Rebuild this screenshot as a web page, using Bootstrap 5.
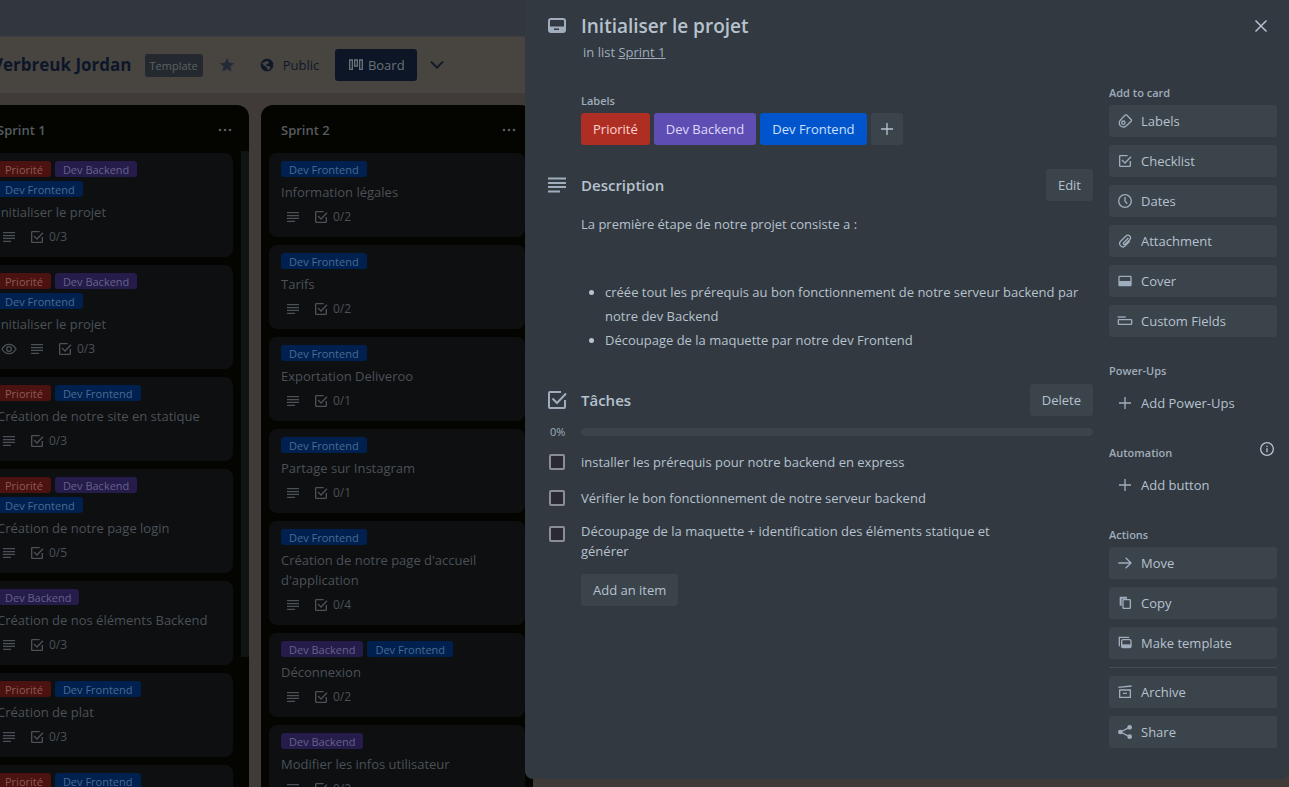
<!DOCTYPE html>
<html lang="fr">
<head>
<meta charset="utf-8">
<meta name="viewport" content="width=device-width, initial-scale=1">
<title>Initialiser le projet</title>
<link href="https://cdn.jsdelivr.net/npm/bootstrap@5.3.0/dist/css/bootstrap.min.css" rel="stylesheet">
<style>
  body { font-family: "Open Sans", "Noto Sans", sans-serif; font-size: 13px; line-height: 20px; color: #b6c2cf; background: #403b38; }
  button { font-family: inherit; }
  .ic { width: 16px; height: 16px; flex: none; fill: none; stroke: currentColor; stroke-width: 2; }
  .ic-lg { width: 24px; height: 24px; }
  .solid { fill: currentColor; stroke: none; }

  /* dimmed board */
  .top-strip { height: 37px; background: #32373e; border-bottom: 1px solid #3b3f42; flex: none; }
  .board-bar { height: 56px; background: #484540; color: #10182a; flex: none; }
  .board-title { font-size: 17px; line-height: 24px; font-weight: 700; color: #0d1629; margin: 0 0 0 -8px; }
  .chip { height: 23px; padding: 0 5px; border-radius: 3px; background: #23292e; color: #5b6166; font-size: 11px; line-height: 24px; margin-left: 13px; }
  .bar-btn { height: 32px; border: 0; background: none; color: #10182a; padding: 0; }
  .bar-btn.current { background: #0d1626; color: #6b7178; border-radius: 3px; width: 82px; }
  .star { color: #222a38; }
  .lists { gap: 12px; margin-left: -23px; padding-top: 12px; min-height: 0; }
  .column { width: 272px; flex: none; background: #040501; border-radius: 12px 12px 0 0; color: #4b5157; }
  .column-head { height: 48px; flex: none; padding: 2px 16px 0 20px; color: #565c61; }
  .column-head h2 { font-size: 13px; line-height: 20px; font-weight: 600; margin: 0; }
  .column-body { padding: 0 8px; gap: 8px; min-height: 0; }
  .column-body.scrolls { padding-right: 16px; }
  .thumb { top: 46px; right: 0; width: 8px; height: 506px; background: #111414; }
  .tile { background: #0d0f11; border-radius: 8px; padding: 8px 12px; flex: none; }
  .tile-tags { gap: 4px; margin-bottom: 5px; }
  .tag-sm { height: 16px; padding: 0 8px; border-radius: 3px; font-size: 11px; line-height: 17px; }
  .tag-sm.red { background: #4b120f; color: #8d5a57; }
  .tag-sm.violet { background: #251c4b; color: #66618a; }
  .tag-sm.blue { background: #00204f; color: #4a6b92; }
  .tile p { margin: 0 0 3px; }
  .tile-meta { height: 24px; gap: 12px; padding-left: 4px; font-size: 12px; }
  .tile-meta span { gap: 4px; }

  /* card dialog */
  .dialog { top: 0; right: 0; width: calc(100% - 525px); min-width: 640px; background: #323940; border-radius: 0 0 8px 8px; padding: 14px 12px 31px 20px; }
  .dialog h1 { font-size: 19px; line-height: 24px; font-weight: 600; margin: 0; color: #b6c2cf; }
  .dialog h2 { font-size: 15px; line-height: 20px; font-weight: 600; margin: 0; color: #b6c2cf; }
  .dialog h3 { font-size: 11px; line-height: 16px; font-weight: 600; margin: 0; color: #9fadbc; }
  .icon-col { width: 36px; flex: none; color: #9fadbc; }
  .in-list { color: #9fadbc; padding-left: 38px; margin-top: 4px; }
  .in-list a { color: inherit; }
  .main-col { padding-top: 31px; }
  .side-col { width: 168px; flex: none; padding-top: 23px; }
  .indent { padding-left: 36px; }
  .soft { height: 32px; border: 0; border-radius: 3px; padding: 0 12px; background: #3b434b; color: #b6c2cf; }
  .tag { height: 32px; border: 0; border-radius: 3px; padding: 0 12px; }
  .tag.red { background: #ae2e24; color: #ffd5d2; }
  .tag.violet { background: #5e4db2; color: #dfd8fd; }
  .tag.blue { background: #0055cc; color: #cce0ff; }
  .desc { padding-top: 11px; }
  .desc p { line-height: 24px; margin: 0 0 44px; }
  .desc ul { line-height: 24px; padding-left: 24px; margin: 0; }
  .bar { height: 8px; border-radius: 4px; background: #3b434b; }
  .pct { width: 36px; flex: none; font-size: 11px; line-height: 8px; color: #9fadbc; padding-left: 5px; }
  .todo { padding-left: 4px; margin-top: 16px; }
  .todo input { appearance: none; width: 16px; height: 16px; margin: 0 16px 0 0; border: 2px solid #8b8d95; border-radius: 2px; background: #2b2a33; flex: none; }
  .todo label { max-width: 440px; }
  .todo.tall { margin-top: 13px; }
  .todo.tall input { margin-top: 5px; }
  .add-row { margin-top: 13px; }
  .side-btn { width: 100%; gap: 8px; padding: 0 8px; margin-bottom: 8px; }
  .side-btn .ic { color: #9fadbc; }
  .side-gap { margin-top: 26px; }
  .auto-row { height: 20px; margin-top: 22px; padding-right: 2px; }
  .plain { background: none; }
  .side-rule { height: 1px; background: #454d55; margin: 0 0 8px; border: 0; opacity: 1; }
  .close-btn { border: 0; background: none; color: #b6c2cf; padding: 0; width: 32px; height: 24px; }
</style>
</head>
<body>
<svg width="0" height="0" class="position-absolute" aria-hidden="true">
  <symbol id="i-desc" viewBox="0 0 24 24"><path d="M3 5.500h18M3 10h18M3 14h18M3 18.500h12"/></symbol>
  <symbol id="i-check" viewBox="0 0 24 24"><path d="M16 4H5a1 1 0 0 0-1 1v14a1 1 0 0 0 1 1h14a1 1 0 0 0 1-1v-7M7.500 10.500l4.500 4.500L21 5.500"/></symbol>
  <symbol id="i-eye" viewBox="0 0 24 24"><path d="M1.500 12C4 7.500 8 5 12 5s8 2.500 10.500 7C20 16.500 16 19 12 19s-8-2.500-10.500-7z"/><circle cx="12" cy="12" r="3.500"/></symbol>
  <symbol id="i-dots" viewBox="0 0 24 24"><g class="solid"><circle cx="4.500" cy="12" r="2"/><circle cx="12" cy="12" r="2"/><circle cx="19.500" cy="12" r="2"/></g></symbol>
  <symbol id="i-star" viewBox="0 0 24 24"><path class="solid" d="M12 1.500l3.200 7 7.600.800-5.700 5.100 1.700 7.600L12 18l-6.800 4 1.700-7.600L1.200 9.300l7.600-.800z"/></symbol>
  <symbol id="i-globe" viewBox="0 0 24 24"><circle cx="12" cy="12" r="8.500"/><path class="solid" d="M3 9l4 3 5 4 1 5-5-1-5-5zM9 3l8 1 4 5v6l-3 3-2-4-5-1v-2l3-1 1-3-4-1-3 2-4 1z"/></symbol>
  <symbol id="i-board" viewBox="0 0 24 24"><path d="M2.500 4.500h4v14h-4zM10 4.500h4v9h-4zM17.500 4.500h4v14h-4z"/></symbol>
  <symbol id="i-down" viewBox="0 0 24 24"><path stroke-width="3" d="M3 7l9 9 9-9"/></symbol>
  <symbol id="i-card" viewBox="0 0 24 24"><rect x="4" y="5" width="16" height="13" rx="2"/><path class="solid" fill-rule="evenodd" d="M4 12.500h16V18H4zM9 14.500V16h5v-1.500z"/></symbol>
  <symbol id="i-close" viewBox="0 0 24 24"><path stroke-width="1.500" d="M6.500 6.500l11 11M17.500 6.500l-11 11"/></symbol>
  <symbol id="i-plus" viewBox="0 0 24 24"><path d="M12 3v18M3 12h18"/></symbol>
  <symbol id="i-label" viewBox="0 0 24 24"><path d="M3.500 13.500c.500-2.500 2-3.500 9-10.500a1.500 1.500 0 0 1 2 0l7 7a1.500 1.500 0 0 1 0 2c-7 7-8 8.500-10.500 9-5 .500-8-2.500-7.500-7.500z"/><circle cx="9.500" cy="14.500" r="2.500"/></symbol>
  <symbol id="i-clock" viewBox="0 0 24 24"><circle cx="12" cy="12" r="9.500"/><path d="M12 6v6.500l3.500 3.500"/></symbol>
  <symbol id="i-clip" viewBox="0 0 24 24"><path d="M17 7.500l-7 7a1.600 1.600 0 0 0 2.300 2.300l6.700-6.800a3.800 3.800 0 0 0-5.500-5.500L5.500 12.500a4.800 4.800 0 0 0 6.800 6.800L19 12.500"/></symbol>
  <symbol id="i-cover" viewBox="0 0 24 24"><rect x="3" y="5" width="18" height="14" rx="1"/><path class="solid" d="M3 12h18v7H3z"/></symbol>
  <symbol id="i-fields" viewBox="0 0 24 24"><path d="M1 6h12"/><rect x="2" y="10" width="20" height="7" rx="1"/></symbol>
  <symbol id="i-info" viewBox="0 0 24 24"><circle cx="12" cy="12" r="9.500"/><path d="M12 11v6M12 7v2"/></symbol>
  <symbol id="i-arrow" viewBox="0 0 24 24"><path d="M2 12h19M13 4l8 8-8 8"/></symbol>
  <symbol id="i-copy" viewBox="0 0 24 24"><rect x="9" y="7" width="11" height="13" rx="1"/><path stroke-width="3" d="M5.500 16V4H15"/></symbol>
  <symbol id="i-tpl" viewBox="0 0 24 24"><rect x="7" y="7" width="14" height="12" rx="2"/><path d="M3.500 17V3.500H18"/><path class="solid" d="M7 14h14v5H7z"/></symbol>
  <symbol id="i-archive" viewBox="0 0 24 24"><path d="M2 5l20-2M4 9h16v11H4zM9 14h6"/></symbol>
  <symbol id="i-share" viewBox="0 0 24 24"><path d="M5 12l14-7M5 12l14 7"/><g class="solid"><circle cx="5" cy="12" r="3.500"/><circle cx="19" cy="5" r="3.500"/><circle cx="19" cy="19" r="3.500"/></g></symbol>
</svg>

<div class="d-flex flex-column vh-100 overflow-hidden">
  <div class="top-strip"></div>
  <header class="board-bar d-flex align-items-center">
    <div class="board-title">Verbreuk Jordan</div>
    <span class="chip">Template</span>
    <button class="bar-btn star d-flex align-items-center ms-3" aria-label="Star"><svg class="ic"><use href="#i-star"/></svg></button>
    <button class="bar-btn d-flex align-items-center gap-2 ms-4"><svg class="ic"><use href="#i-globe"/></svg>Public</button>
    <button class="bar-btn current d-flex align-items-center justify-content-center gap-1 ms-3"><svg class="ic"><use href="#i-board"/></svg>Board</button>
    <button class="bar-btn d-flex align-items-center ms-2 px-1" aria-label="Views"><svg class="ic"><use href="#i-down"/></svg></button>
  </header>
  <main class="lists d-flex flex-grow-1">
    <section class="column d-flex flex-column position-relative">
      <div class="column-head d-flex align-items-center justify-content-between"><h2>Sprint 1</h2><svg class="ic"><use href="#i-dots"/></svg></div>
      <div class="thumb position-absolute"></div>
      <div class="column-body scrolls d-flex flex-column overflow-hidden">
        <article class="tile"><div class="tile-tags d-flex flex-wrap"><span class="tag-sm red">Priorité</span><span class="tag-sm violet">Dev Backend</span><span class="tag-sm blue">Dev Frontend</span></div><p>Initialiser le projet</p><div class="tile-meta d-flex align-items-center"><svg class="ic"><use href="#i-desc"/></svg><span class="d-flex align-items-center"><svg class="ic"><use href="#i-check"/></svg>0/3</span></div></article>
        <article class="tile"><div class="tile-tags d-flex flex-wrap"><span class="tag-sm red">Priorité</span><span class="tag-sm violet">Dev Backend</span><span class="tag-sm blue">Dev Frontend</span></div><p>Initialiser le projet</p><div class="tile-meta d-flex align-items-center"><svg class="ic"><use href="#i-eye"/></svg><svg class="ic"><use href="#i-desc"/></svg><span class="d-flex align-items-center"><svg class="ic"><use href="#i-check"/></svg>0/3</span></div></article>
        <article class="tile"><div class="tile-tags d-flex flex-wrap"><span class="tag-sm red">Priorité</span><span class="tag-sm blue">Dev Frontend</span></div><p>Création de notre site en statique</p><div class="tile-meta d-flex align-items-center"><svg class="ic"><use href="#i-desc"/></svg><span class="d-flex align-items-center"><svg class="ic"><use href="#i-check"/></svg>0/3</span></div></article>
        <article class="tile"><div class="tile-tags d-flex flex-wrap"><span class="tag-sm red">Priorité</span><span class="tag-sm violet">Dev Backend</span><span class="tag-sm blue">Dev Frontend</span></div><p>Création de notre page login</p><div class="tile-meta d-flex align-items-center"><svg class="ic"><use href="#i-desc"/></svg><span class="d-flex align-items-center"><svg class="ic"><use href="#i-check"/></svg>0/5</span></div></article>
        <article class="tile"><div class="tile-tags d-flex flex-wrap"><span class="tag-sm violet">Dev Backend</span></div><p>Création de nos éléments Backend</p><div class="tile-meta d-flex align-items-center"><svg class="ic"><use href="#i-desc"/></svg><span class="d-flex align-items-center"><svg class="ic"><use href="#i-check"/></svg>0/3</span></div></article>
        <article class="tile"><div class="tile-tags d-flex flex-wrap"><span class="tag-sm red">Priorité</span><span class="tag-sm blue">Dev Frontend</span></div><p>Création de plat</p><div class="tile-meta d-flex align-items-center"><svg class="ic"><use href="#i-desc"/></svg><span class="d-flex align-items-center"><svg class="ic"><use href="#i-check"/></svg>0/3</span></div></article>
        <article class="tile"><div class="tile-tags d-flex flex-wrap"><span class="tag-sm red">Priorité</span><span class="tag-sm blue">Dev Frontend</span></div></article>
      </div>
    </section>
    <section class="column d-flex flex-column">
      <div class="column-head d-flex align-items-center justify-content-between"><h2>Sprint 2</h2><svg class="ic"><use href="#i-dots"/></svg></div>
      <div class="column-body d-flex flex-column overflow-hidden">
        <article class="tile"><div class="tile-tags d-flex flex-wrap"><span class="tag-sm blue">Dev Frontend</span></div><p>Information légales</p><div class="tile-meta d-flex align-items-center"><svg class="ic"><use href="#i-desc"/></svg><span class="d-flex align-items-center"><svg class="ic"><use href="#i-check"/></svg>0/2</span></div></article>
        <article class="tile"><div class="tile-tags d-flex flex-wrap"><span class="tag-sm blue">Dev Frontend</span></div><p>Tarifs</p><div class="tile-meta d-flex align-items-center"><svg class="ic"><use href="#i-desc"/></svg><span class="d-flex align-items-center"><svg class="ic"><use href="#i-check"/></svg>0/2</span></div></article>
        <article class="tile"><div class="tile-tags d-flex flex-wrap"><span class="tag-sm blue">Dev Frontend</span></div><p>Exportation Deliveroo</p><div class="tile-meta d-flex align-items-center"><svg class="ic"><use href="#i-desc"/></svg><span class="d-flex align-items-center"><svg class="ic"><use href="#i-check"/></svg>0/1</span></div></article>
        <article class="tile"><div class="tile-tags d-flex flex-wrap"><span class="tag-sm blue">Dev Frontend</span></div><p>Partage sur Instagram</p><div class="tile-meta d-flex align-items-center"><svg class="ic"><use href="#i-desc"/></svg><span class="d-flex align-items-center"><svg class="ic"><use href="#i-check"/></svg>0/1</span></div></article>
        <article class="tile"><div class="tile-tags d-flex flex-wrap"><span class="tag-sm blue">Dev Frontend</span></div><p>Création de notre page d'accueil d'application</p><div class="tile-meta d-flex align-items-center"><svg class="ic"><use href="#i-desc"/></svg><span class="d-flex align-items-center"><svg class="ic"><use href="#i-check"/></svg>0/4</span></div></article>
        <article class="tile"><div class="tile-tags d-flex flex-wrap"><span class="tag-sm violet">Dev Backend</span><span class="tag-sm blue">Dev Frontend</span></div><p>Déconnexion</p><div class="tile-meta d-flex align-items-center"><svg class="ic"><use href="#i-desc"/></svg><span class="d-flex align-items-center"><svg class="ic"><use href="#i-check"/></svg>0/2</span></div></article>
        <article class="tile"><div class="tile-tags d-flex flex-wrap"><span class="tag-sm violet">Dev Backend</span></div><p>Modifier les infos utilisateur</p><div class="tile-meta d-flex align-items-center"><svg class="ic"><use href="#i-desc"/></svg><span class="d-flex align-items-center"><svg class="ic"><use href="#i-check"/></svg>0/2</span></div></article>
      </div>
    </section>
  </main>
</div>

<div class="dialog position-absolute" role="dialog" aria-label="Initialiser le projet">
  <div class="d-flex align-items-center">
    <div class="icon-col d-flex"><svg class="ic ic-lg"><use href="#i-card"/></svg></div>
    <h1 class="flex-grow-1">Initialiser le projet</h1>
    <button class="close-btn d-flex align-items-center justify-content-center" aria-label="Close"><svg class="ic ic-lg"><use href="#i-close"/></svg></button>
  </div>
  <div class="in-list">in list <a href="#">Sprint 1</a></div>

  <div class="d-flex gap-3">
    <div class="main-col flex-grow-1">
      <div class="indent">
        <h3 class="mb-1">Labels</h3>
        <div class="d-flex gap-1">
          <button class="tag red">Priorité</button><button class="tag violet">Dev Backend</button><button class="tag blue">Dev Frontend</button>
          <button class="soft px-2" aria-label="Add label"><svg class="ic d-block"><use href="#i-plus"/></svg></button>
        </div>
      </div>

      <div class="d-flex align-items-center mt-4">
        <div class="icon-col d-flex"><svg class="ic ic-lg"><use href="#i-desc"/></svg></div>
        <h2 class="flex-grow-1">Description</h2>
        <button class="soft">Edit</button>
      </div>
      <div class="desc indent">
        <p>La première étape de notre projet consiste a :</p>
        <ul>
          <li>créée tout les prérequis au bon fonctionnement de notre serveur backend par notre dev Backend</li>
          <li>Découpage de la maquette par notre dev Frontend</li>
        </ul>
      </div>

      <div class="d-flex align-items-center mt-4 pt-2">
        <div class="icon-col d-flex"><svg class="ic ic-lg"><use href="#i-check"/></svg></div>
        <h2 class="flex-grow-1">Tâches</h2>
        <button class="soft">Delete</button>
      </div>
      <div class="d-flex align-items-center mt-2 pt-1">
        <div class="pct">0%</div>
        <div class="bar flex-grow-1" role="progressbar" aria-label="Tâches" aria-valuenow="0" aria-valuemin="0" aria-valuemax="100"></div>
      </div>
      <div class="todo d-flex align-items-center"><input type="checkbox" id="t1"><label for="t1">installer les prérequis pour notre backend en express</label></div>
      <div class="todo d-flex align-items-center"><input type="checkbox" id="t2"><label for="t2">Vérifier le bon fonctionnement de notre serveur backend</label></div>
      <div class="todo tall d-flex align-items-start"><input type="checkbox" id="t3"><label for="t3">Découpage de la maquette + identification des éléments statique et générer</label></div>
      <div class="indent add-row"><button class="soft">Add an item</button></div>
    </div>

    <aside class="side-col">
      <h3 class="mb-1">Add to card</h3>
      <button class="soft side-btn d-flex align-items-center"><svg class="ic"><use href="#i-label"/></svg>Labels</button>
      <button class="soft side-btn d-flex align-items-center"><svg class="ic"><use href="#i-check"/></svg>Checklist</button>
      <button class="soft side-btn d-flex align-items-center"><svg class="ic"><use href="#i-clock"/></svg>Dates</button>
      <button class="soft side-btn d-flex align-items-center"><svg class="ic"><use href="#i-clip"/></svg>Attachment</button>
      <button class="soft side-btn d-flex align-items-center"><svg class="ic"><use href="#i-cover"/></svg>Cover</button>
      <button class="soft side-btn d-flex align-items-center"><svg class="ic"><use href="#i-fields"/></svg>Custom Fields</button>
      <div class="side-gap"><h3 class="mb-2">Power-Ups</h3></div>
      <button class="soft side-btn plain d-flex align-items-center"><svg class="ic"><use href="#i-plus"/></svg>Add Power-Ups</button>
      <div class="auto-row d-flex justify-content-between mb-2"><h3 class="align-self-end">Automation</h3><svg class="ic"><use href="#i-info"/></svg></div>
      <button class="soft side-btn plain d-flex align-items-center"><svg class="ic"><use href="#i-plus"/></svg>Add button</button>
      <div class="side-gap"><h3 class="mb-1">Actions</h3></div>
      <button class="soft side-btn d-flex align-items-center"><svg class="ic"><use href="#i-arrow"/></svg>Move</button>
      <button class="soft side-btn d-flex align-items-center"><svg class="ic"><use href="#i-copy"/></svg>Copy</button>
      <button class="soft side-btn d-flex align-items-center"><svg class="ic"><use href="#i-tpl"/></svg>Make template</button>
      <hr class="side-rule">
      <button class="soft side-btn d-flex align-items-center"><svg class="ic"><use href="#i-archive"/></svg>Archive</button>
      <button class="soft side-btn mb-0 d-flex align-items-center"><svg class="ic"><use href="#i-share"/></svg>Share</button>
    </aside>
  </div>
</div>
<script src="https://cdn.jsdelivr.net/npm/bootstrap@5.3.0/dist/js/bootstrap.bundle.min.js"></script>
</body>
</html>
